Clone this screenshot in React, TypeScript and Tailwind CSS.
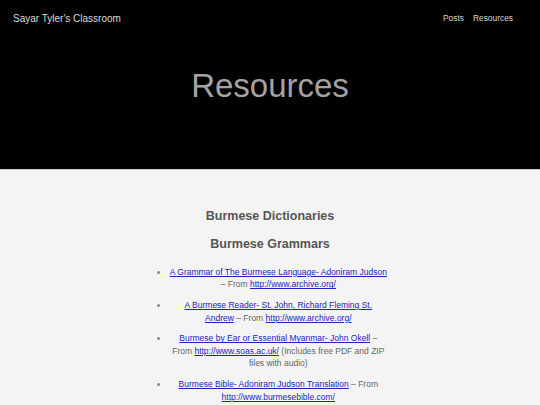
const font = { fontFamily: '"Liberation Sans", Arial, sans-serif' };

const link = "text-[#2222c4] underline";

function Header() {
  return (
    <header className="h-[170px] bg-black border-b border-[#cfcfcf] flex flex-col">
      <nav className="h-[36px] flex items-center justify-between pl-[13px] pr-[27px]">
        <a className="text-[10px] text-[#dcdcdc]">Sayar Tyler's Classroom</a>
        <ul className="flex gap-[9px] text-[8.4px] text-[#d4d4d4]">
          <li>Posts</li>
          <li>Resources</li>
        </ul>
      </nav>
      <h1 className="mt-[33px] text-center text-[33px] leading-none text-[#a3a3a3]">
        Resources
      </h1>
    </header>
  );
}

export default function App() {
  return (
    <div className="min-h-[405px] bg-[#f4f4f4]" style={font}>
      <Header />
      <main className="w-[234.6px] mx-auto pt-[40px] pb-10 text-[#666]">
        <h2 className="text-center text-[12.5px] leading-none font-bold text-[#565656]">
          Burmese Dictionaries
        </h2>
        <h2 className="mt-[15.5px] text-center text-[12.5px] leading-none font-bold text-[#565656]">
          Burmese Grammars
        </h2>
        <ul className="mt-[15.3px] list-disc pl-[16.6px] flex flex-col gap-[8.3px] text-[8.5px] leading-[12.5px] text-center marker:text-[#888]">
          <li>
            <a className={link}>A Grammar of The Burmese Language- Adoniram Judson</a> – From{" "}
            <a className={link}>http://www.archive.org/</a>
          </li>
          <li>
            <a className={link}>
              A Burmese Reader- St. John, Richard Fleming St.
              <br />
              Andrew
            </a>{" "}
            – From <a className={link}>http://www.archive.org/</a>
          </li>
          <li>
            <a className={link}>Burmese by Ear or Essential Myanmar- John Okell</a> –
            <br />
            From <a className={link}>http://www.soas.ac.uk/</a> (Includes free PDF and ZIP files
            with audio)
          </li>
          <li>
            <a className={link}>Burmese Bible- Adoniram Judson Translation</a> – From{" "}
            <a className={link}>http://www.burmesebible.com/</a>
          </li>
        </ul>
      </main>
    </div>
  );
}
